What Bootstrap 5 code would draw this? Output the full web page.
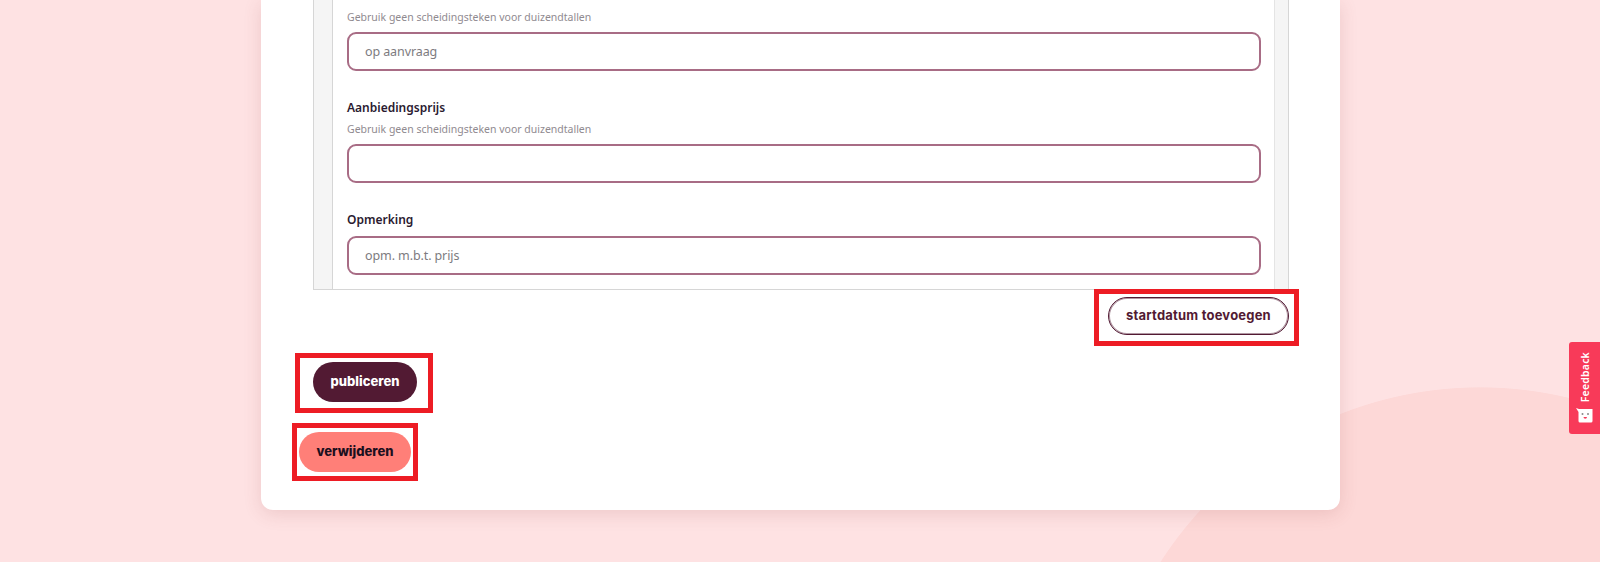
<!DOCTYPE html>
<html lang="nl">
<head>
  <meta charset="UTF-8" />
  <meta name="viewport" content="width=device-width, initial-scale=1" />
  <title>Aanbod bewerken</title>
  <link href="https://cdn.jsdelivr.net/npm/bootstrap@5.3.3/dist/css/bootstrap.min.css" rel="stylesheet" />
  <style>
    body {
      font-family: "Noto Sans", "Liberation Sans", sans-serif;
      height: 562px;
      overflow: hidden;
      background: radial-gradient(circle 380px at 1480px 767px, #fdd8d7 99.8%, #fee2e3 100%) #fee2e3;
    }
    .sheet {
      width: 1079px;
      margin-left: 261px;
      padding: 0 41px 29px 52px;
      background: #fff;
      border-radius: 0 0 12px 12px;
      box-shadow: 0 4px 18px rgba(150, 70, 70, .16);
    }
    .price-panel {
      border: 1px solid #d6d6d6;
      border-top: 0;
      background: #f5f5f5;
      margin-right: 10px;
    }
    .price-body {
      margin-left: 18px;
      margin-right: 13px;
      padding: 8px 13px 14px 14px;
      background: #fff;
      border-left: 1px solid #d6d6d6;
      border-right: 1px solid #e4e4e4;
    }
    .price-label {
      display: block;
      margin: 27px 0 2px;
      font-size: 12px;
      line-height: 20px;
      font-weight: 600;
      color: #2a1a30;
    }
    .price-label-note { margin-bottom: 6px; }
    .price-help {
      margin-bottom: 6px;
      font-size: 10.5px;
      line-height: 18px;
      color: #908a90;
    }
    .price-input {
      height: 39px;
      padding: 0 16px;
      font-size: 12.5px;
      letter-spacing: -.1px;
      border: 2px solid #a86c85;
      border-radius: 9px;
    }
    .price-input::placeholder { color: #7d7b80; }
    .red-frame {
      display: inline-block;
      border: 5px solid #ed1c24;
      background: #fff;
    }
    .frame-start {
      margin-top: -1px;
      padding: 3px 5px 6px 9px;
    }
    .frame-publish {
      margin: 7px 0 10px -18px;
      padding: 4px 11px 6px 13px;
    }
    .frame-delete {
      margin-left: -21px;
      padding: 4px 2px;
    }
    .pill-btn {
      display: block;
      height: 38px;
      padding: 0;
      font-family: "Inter", "Liberation Sans", sans-serif;
      font-size: 13px;
      font-weight: 800;
      border-radius: 20px;
    }
    .pill-start {
      width: 181px;
      color: #521a33;
      font-weight: 700;
      letter-spacing: .2px;
      border: 1px solid #521a33;
      box-shadow: inset 0 0 0 1px rgba(82, 26, 51, .45);
      background: #fff;
    }
    .pill-publish {
      width: 104px;
      height: 40px;
      color: #fff;
      background: #521a33;
      border: 0;
    }
    .pill-delete {
      width: 112px;
      height: 40px;
      color: #1c0f1e;
      background: #ff7f78;
      border: 0;
    }
    .feedback-tab {
      position: fixed;
      top: 342px;
      right: 0;
      width: 31px;
      height: 92px;
      padding: 10px 0 11px;
      color: #fff;
      background: #f83a59;
      border-radius: 3px 0 0 3px;
    }
    .feedback-tab span {
      writing-mode: vertical-rl;
      transform: rotate(180deg);
      font-size: 10.5px;
      font-weight: 600;
      letter-spacing: .2px;
      line-height: 14px;
    }
  </style>
</head>
<body>
  <div class="sheet">
    <div class="price-panel">
      <div class="price-body">
        <div class="price-help">Gebruik geen scheidingsteken voor duizendtallen</div>
        <input type="text" class="form-control price-input" placeholder="op aanvraag" />

        <label class="price-label" for="offerPrice">Aanbiedingsprijs</label>
        <div class="price-help">Gebruik geen scheidingsteken voor duizendtallen</div>
        <input type="text" id="offerPrice" class="form-control price-input" />

        <label class="price-label price-label-note" for="priceNote">Opmerking</label>
        <input type="text" id="priceNote" class="form-control price-input" placeholder="opm. m.b.t. prijs" />
      </div>
    </div>

    <div class="d-flex justify-content-end">
      <div class="red-frame frame-start">
        <button type="button" class="btn pill-btn pill-start">startdatum toevoegen</button>
      </div>
    </div>
    <div>
      <div class="red-frame frame-publish">
        <button type="button" class="btn pill-btn pill-publish">publiceren</button>
      </div>
    </div>
    <div>
      <div class="red-frame frame-delete">
        <button type="button" class="btn pill-btn pill-delete">verwijderen</button>
      </div>
    </div>
  </div>

  <div class="feedback-tab d-flex flex-column align-items-center justify-content-between">
    <span>Feedback</span>
    <svg width="17" height="15" viewBox="0 0 17 15" aria-hidden="true">
      <path d="M0 0l3 1h13.500v12a1.500 1.500 0 0 1-1.500 1.500H4a1.500 1.500 0 0 1-1.500-1.500V4z" fill="#fff" />
      <circle cx="6.500" cy="6" r="1" fill="#8a8a8a" />
      <circle cx="12" cy="6" r="1" fill="#8a8a8a" />
      <path d="M7.500 9h3.500a1.750 1.750 0 0 1-3.500 0z" fill="#f83a59" />
    </svg>
  </div>

  <script src="https://cdn.jsdelivr.net/npm/bootstrap@5.3.3/dist/js/bootstrap.bundle.min.js"></script>
</body>
</html>
